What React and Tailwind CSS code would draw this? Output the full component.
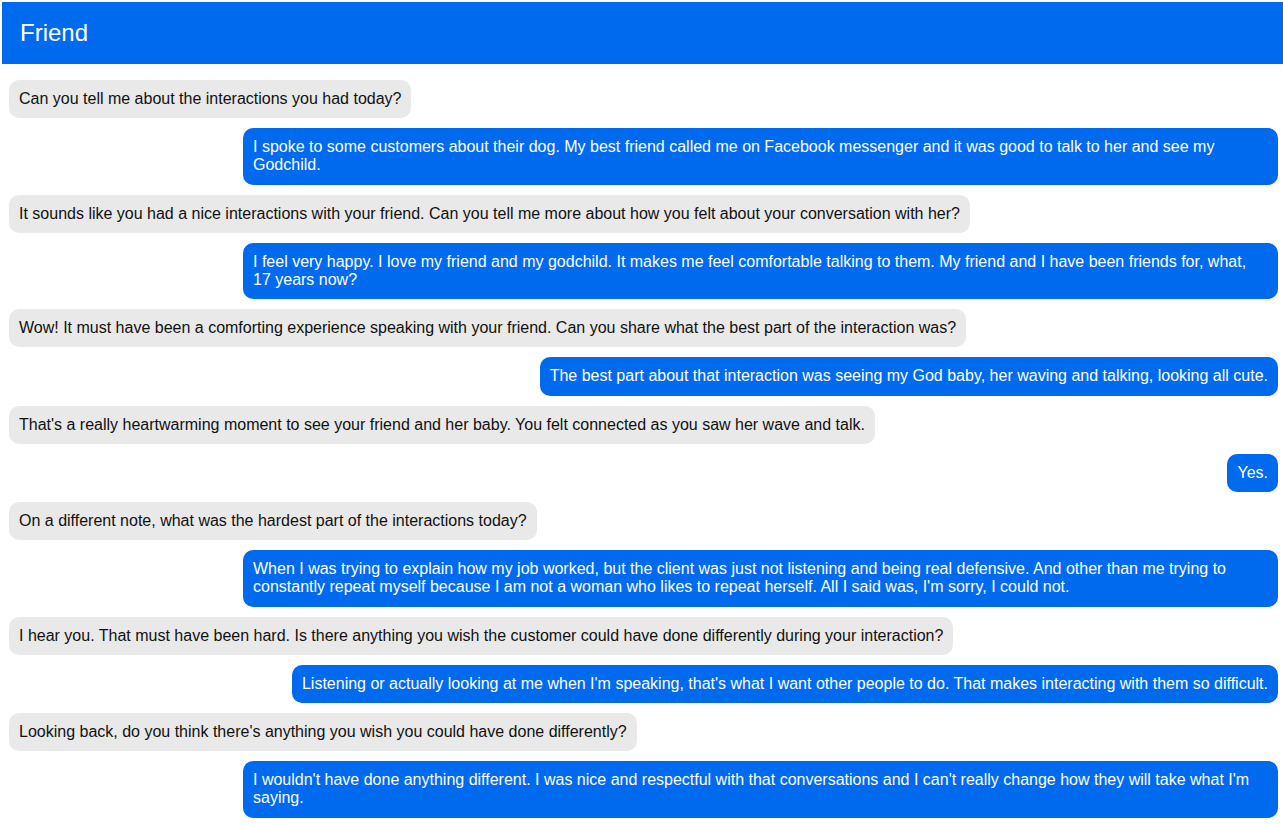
const messages = [
  { from: "bot", text: "Can you tell me about the interactions you had today?" },
  { from: "me", text: "I spoke to some customers about their dog. My best friend called me on Facebook messenger and it was good to talk to her and see my Godchild." },
  { from: "bot", text: "It sounds like you had a nice interactions with your friend. Can you tell me more about how you felt about your conversation with her?" },
  { from: "me", text: "I feel very happy. I love my friend and my godchild. It makes me feel comfortable talking to them. My friend and I have been friends for, what, 17 years now?" },
  { from: "bot", text: "Wow! It must have been a comforting experience speaking with your friend. Can you share what the best part of the interaction was?" },
  { from: "me", text: "The best part about that interaction was seeing my God baby, her waving and talking, looking all cute." },
  { from: "bot", text: "That's a really heartwarming moment to see your friend and her baby. You felt connected as you saw her wave and talk." },
  { from: "me", text: "Yes." },
  { from: "bot", text: "On a different note, what was the hardest part of the interactions today?" },
  { from: "me", text: "When I was trying to explain how my job worked, but the client was just not listening and being real defensive. And other than me trying to constantly repeat myself because I am not a woman who likes to repeat herself. All I said was, I'm sorry, I could not." },
  { from: "bot", text: "I hear you. That must have been hard. Is there anything you wish the customer could have done differently during your interaction?" },
  { from: "me", text: "Listening or actually looking at me when I'm speaking, that's what I want other people to do. That makes interacting with them so difficult." },
  { from: "bot", text: "Looking back, do you think there's anything you wish you could have done differently?" },
  { from: "me", text: "I wouldn't have done anything different. I was nice and respectful with that conversations and I can't really change how they will take what I'm saying." },
];

export default function App() {
  return (
    <div className="min-h-screen bg-white pt-[2px] pl-[2px] font-['Liberation_Sans',Arial,sans-serif]">
      <div className="h-[62px] bg-[#006AEE] flex items-center px-[18px]">
        <h1 className="text-white text-[24px] leading-none">Friend</h1>
      </div>
      <div className="flex flex-col gap-[10px] pl-[7px] pr-[5px] pt-[16px] pb-[8px]">
        {messages.map((m, i) => (
          <div key={i} className={m.from === "me" ? "flex justify-end" : "flex justify-start"}>
            <div
              className={
                m.from === "me"
                  ? "max-w-[1035px] rounded-[10px] bg-[#006AEE] text-white px-[10px] py-[10px] text-[16px] leading-[18.2px]"
                  : "max-w-[1035px] rounded-[10px] bg-[#E9E9E9] text-[#111] px-[10px] py-[10px] text-[16px] leading-[18.2px]"
              }
            >
              {m.text}
            </div>
          </div>
        ))}
      </div>
    </div>
  );
}
